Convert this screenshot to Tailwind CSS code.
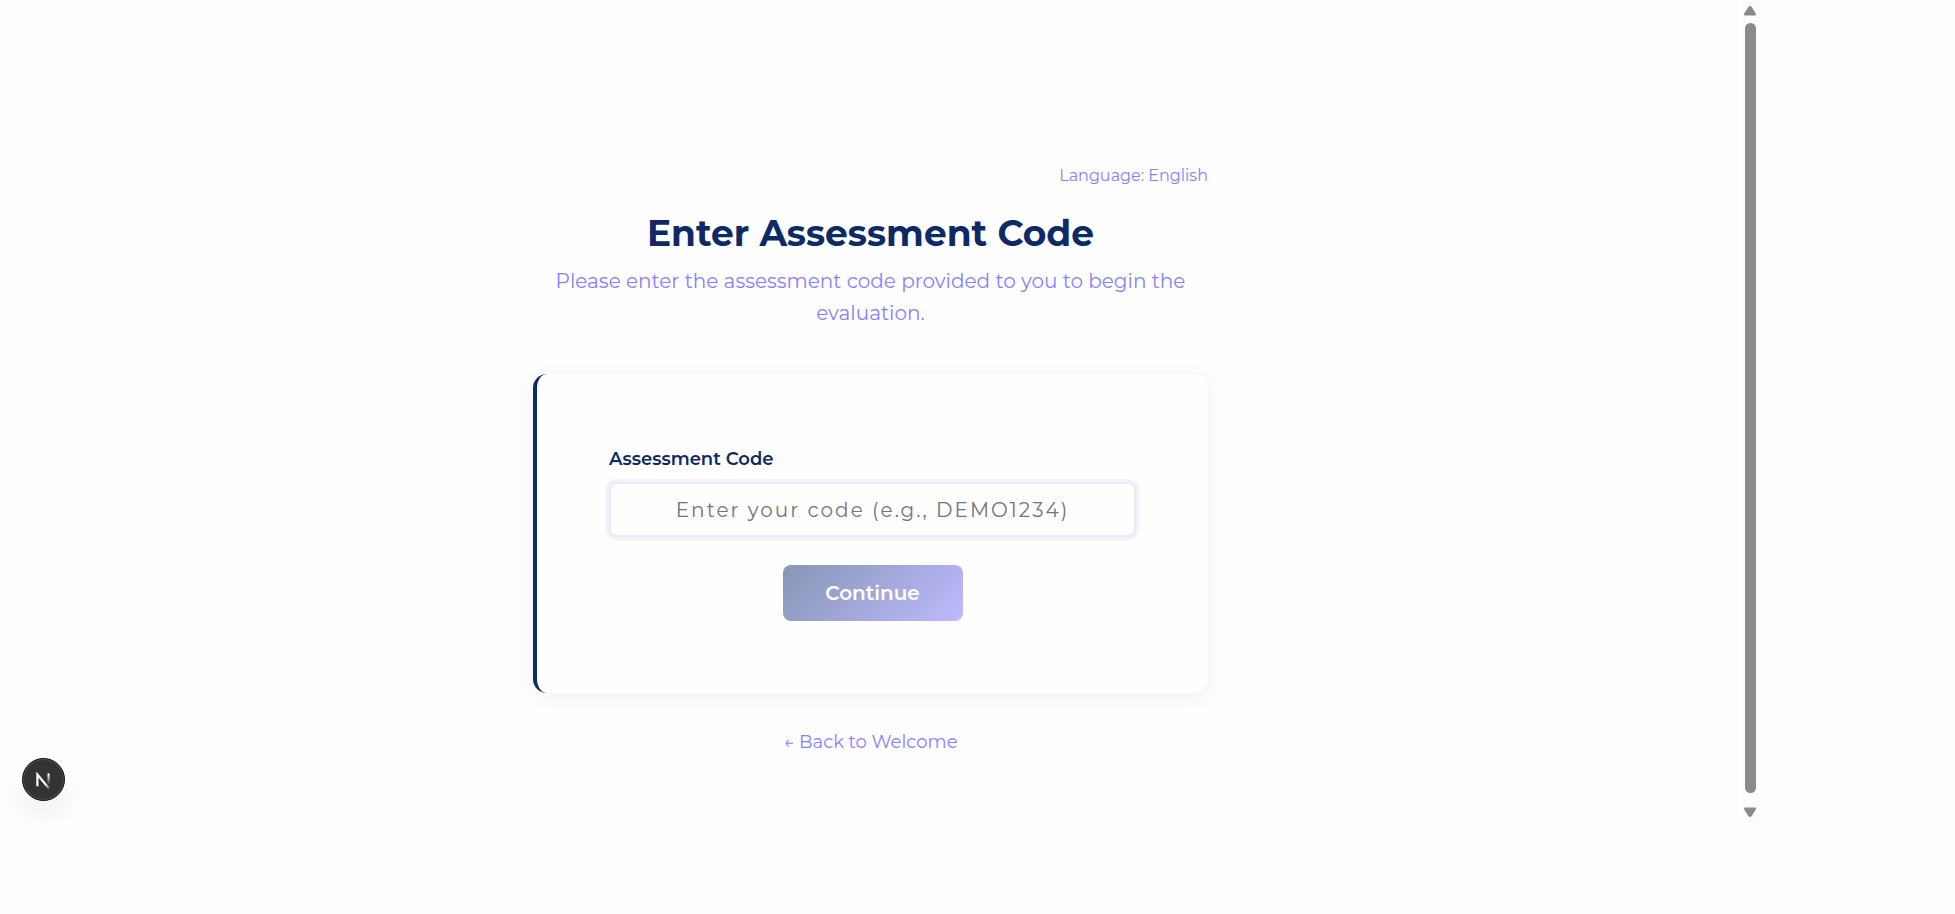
<!DOCTYPE html>
<html lang="en">
<head>
<meta charset="utf-8">
<meta name="viewport" content="width=device-width, initial-scale=1">
<title>Enter Assessment Code</title>
<script src="https://cdn.jsdelivr.net/npm/@tailwindcss/browser@4"></script>
</head>
<body class="bg-[#fefefe] font-['Montserrat','Inter',sans-serif] text-[#8880ff]">
<div class="h-screen pr-[196px] pb-[91px]">
  <div class="relative flex h-full overflow-hidden">
    <main class="flex min-w-0 flex-1 flex-col items-center pt-[164px]">
      <div class="flex w-full max-w-[675px] flex-col">
        <p class="text-right text-[16px] leading-6">Language: English</p>
        <h1 class="mt-[23px] text-center text-[36px] leading-11 font-bold text-[#0d2a66]">Enter Assessment Code</h1>
        <p class="mt-2.5 text-center text-[20px] leading-8">Please enter the assessment code provided to you to begin the evaluation.</p>
        <form class="mt-[45px] flex flex-col rounded-[14px] border-l-4 border-[#0d2a66] bg-[#fefefe] p-[72px] shadow-[0_4px_20px_rgba(13,42,102,0.06)]">
          <label for="code" class="text-[18px] leading-[26px] font-semibold text-[#0d2a66]">Assessment Code</label>
          <input id="code" type="text" placeholder="Enter your code (e.g., DEMO1234)" class="mt-2.5 h-[55px] w-full rounded-lg border-2 border-[#ececee] bg-[#fefefe] px-4 text-center text-[20px] tracking-[2px] text-[#0d2a66] ring-3 ring-[#f2f0ff] outline-none placeholder:text-[#757575]">
          <button type="button" class="mt-7 h-14 w-[180px] self-center rounded-lg bg-linear-135 from-[#8696b5] to-[#bfbaff] text-[20px] font-semibold text-white">Continue</button>
        </form>
        <a href="#" class="mt-[37px] self-center text-[18px] leading-6">← Back to Welcome</a>
      </div>
    </main>

    <div class="flex w-[18px] shrink-0 flex-col items-center bg-[#fcfcfc] py-1.5" aria-hidden="true">
      <svg class="h-[10px] w-3" viewBox="0 0 12 10"><path d="M6 0Q7 0 7.7 1.1L11.8 7.6Q12.2 9.5 10.7 9.5H1.3Q-.2 9.5.2 7.6L4.3 1.1Q5 0 6 0Z" fill="#8b8b8b"/></svg>
      <div class="my-[7px] w-[11px] flex-1 rounded-full bg-[#8b8b8b]"></div>
      <svg class="mt-[7px] h-[10px] w-3" viewBox="0 0 12 10"><path d="M6 10Q7 10 7.7 8.9L11.8 2.4Q12.2.5 10.7.5H1.3Q-.2.5.2 2.4L4.3 8.9Q5 10 6 10Z" fill="#8b8b8b"/></svg>
    </div>

    <button type="button" aria-label="Open developer tools" class="absolute bottom-[22px] left-[22px] flex size-[43px] items-center justify-center rounded-full border border-[#111] bg-[#333] shadow-[inset_0_0_0_1px_#505050,0_16px_32px_-4px_rgba(0,0,0,0.09)]">
      <svg class="size-[18px]" viewBox="0 0 18 18" fill="none">
        <defs>
          <linearGradient id="diag" x1="11" y1="13" x2="15" y2="18" gradientUnits="userSpaceOnUse"><stop stop-color="#fff"/><stop offset="1" stop-color="#fff" stop-opacity="0.1"/></linearGradient>
          <linearGradient id="stem" x1="14" y1="3" x2="14" y2="14" gradientUnits="userSpaceOnUse"><stop stop-color="#fff"/><stop offset="1" stop-color="#fff" stop-opacity="0"/></linearGradient>
        </defs>
        <path d="M2.4 15.2V3.6L14 17.4" stroke="url(#diag)" stroke-width="2.2"/>
        <path d="M13.6 2.4V13" stroke="url(#stem)" stroke-width="2.2"/>
      </svg>
    </button>
  </div>
</div>
</body>
</html>
